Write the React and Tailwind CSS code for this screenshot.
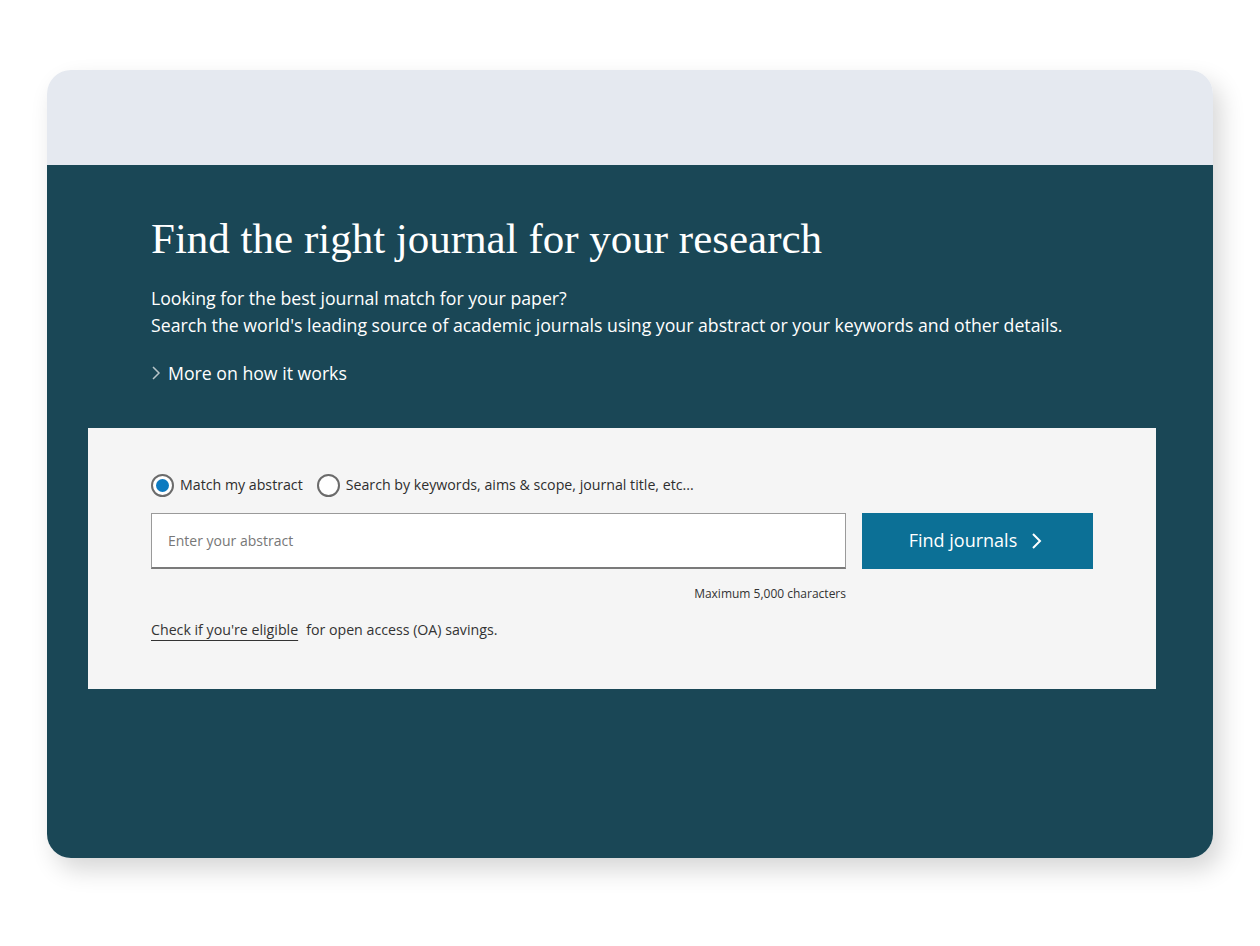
import { useState } from "react";

const sans = { fontFamily: "'Open Sans', Lato, sans-serif" };

const Radio = ({ checked, label, onClick }) => (
    <button onClick={onClick} className="flex items-center gap-[6px]">
        <span className="w-[23px] h-[23px] rounded-full border-2 border-[#6b6b6b] bg-white flex items-center justify-center">
            {checked && <span className="w-[13px] h-[13px] rounded-full bg-[#0c7ac0]" />}
        </span>
        <span className="text-[14.2px] text-[#2e2e2e]">{label}</span>
    </button>
);

const App = () => {
    const [mode, setMode] = useState("abstract");

    return (
        <div className="w-[1260px] h-[946px] bg-white pt-[70px] pl-[47px]" style={sans}>
            <div className="w-[1166px] h-[788px] rounded-[24px] overflow-hidden flex flex-col shadow-[8px_12px_24px_rgba(0,0,0,0.16)]">
                <div className="h-[95px] bg-[#e5e9f0]" />
                <div className="flex-1 bg-[#1a4756] pt-[49px]">
                    <div className="pl-[104px]">
                        <h1
                            className="text-[43px] leading-[50px] text-white"
                            style={{ fontFamily: "'Liberation Serif', serif" }}
                        >
                            Find the right journal for your research
                        </h1>
                        <p className="mt-[21px] text-[17.7px] leading-[27px] text-white">
                            Looking for the best journal match for your paper?
                            <br />
                            Search the world's leading source of academic journals using your abstract or your keywords and other details.
                        </p>
                        <a href="#" className="mt-[21px] flex items-center gap-[6px] text-[17.7px] text-white">
                            <svg width="11" height="16" viewBox="0 0 11 16" fill="none">
                                <path d="M2 2l6 6-6 6" stroke="#b8c4c8" strokeWidth="1.5" />
                            </svg>
                            More on how it works
                        </a>
                    </div>

                    <div className="mt-[41px] ml-[41px] w-[1068px] h-[261px] bg-[#f5f5f5] pt-[46px] pl-[63px]">
                        <div className="flex items-center gap-[14px]">
                            <Radio
                                checked={mode === "abstract"}
                                label="Match my abstract"
                                onClick={() => setMode("abstract")}
                            />
                            <Radio
                                checked={mode === "keywords"}
                                label="Search by keywords, aims & scope, journal title, etc..."
                                onClick={() => setMode("keywords")}
                            />
                        </div>

                        <div className="mt-[16px] flex gap-[16px]">
                            <div className="w-[695px]">
                                <input
                                    placeholder="Enter your abstract"
                                    className="w-full h-[56px] bg-white border border-[#9a9a9a] border-b-2 border-b-[#7a7a7a] px-[16px] text-[14px] text-[#333] placeholder:text-[#777] outline-none"
                                />
                                <div className="mt-[16px] text-right text-[12px] text-[#333]">
                                    Maximum 5,000 characters
                                </div>
                            </div>
                            <button className="w-[231px] h-[56px] bg-[#0c7096] text-white text-[18px] flex items-center justify-center gap-[13px] pr-[4px]">
                                Find journals
                                <svg width="12" height="18" viewBox="0 0 12 18" fill="none">
                                    <path d="M3 2l7 7-7 7" stroke="white" strokeWidth="2" />
                                </svg>
                            </button>
                        </div>

                        <p className="mt-[16px] text-[14.2px] text-[#333]">
                            <a href="#" className="underline decoration-[#333] underline-offset-[5px]">
                                Check if you're eligible
                            </a>
                            <span className="ml-[8px]">for open access (OA) savings.</span>
                        </p>
                    </div>
                </div>
            </div>
        </div>
    );
};

export default App;
